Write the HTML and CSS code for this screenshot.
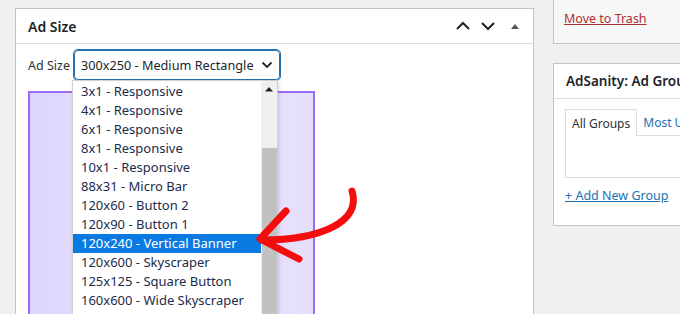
FILE: index.html
```html
<!DOCTYPE html>
<html lang="en">
<head>
  <meta charset="UTF-8">
  <title>Ad Size</title>
  <link rel="stylesheet" href="styles.css">
</head>
<body>

<div class="wrap">
  <!-- Ad Size box -->
  <div class="postbox main-box">
    <div class="box-head">
      <h2>Ad Size</h2>
      <div class="head-actions">
        <svg width="16" height="10" viewBox="0 0 16 10"><path d="M2 8 L8 2 L14 8" fill="none" stroke="#1d2327" stroke-width="2"/></svg>
        <svg width="16" height="10" viewBox="0 0 16 10"><path d="M2 2 L8 8 L14 2" fill="none" stroke="#1d2327" stroke-width="2"/></svg>
        <svg class="tri" width="10" height="8" viewBox="0 0 10 8"><path d="M1 7 L5 2 L9 7 Z" fill="#50575e"/></svg>
      </div>
    </div>
    <div class="box-body">
      <div class="size-row">
        <label>Ad Size</label>
        <div class="select">
          <span>300x250 - Medium Rectangle</span>
          <svg width="12" height="8" viewBox="0 0 12 8"><path d="M1.5 1.5 L6 6 L10.5 1.5" fill="none" stroke="#1d2327" stroke-width="1.8"/></svg>
        </div>
      </div>
      <div class="preview"></div>

      <!-- open dropdown list -->
      <div class="dropdown">
        <ul class="options">
          <li>3x1 - Responsive</li>
          <li>4x1 - Responsive</li>
          <li>6x1 - Responsive</li>
          <li>8x1 - Responsive</li>
          <li>10x1 - Responsive</li>
          <li>88x31 - Micro Bar</li>
          <li>120x60 - Button 2</li>
          <li>120x90 - Button 1</li>
          <li class="selected">120x240 - Vertical Banner</li>
          <li>120x600 - Skyscraper</li>
          <li>125x125 - Square Button</li>
          <li>160x600 - Wide Skyscraper</li>
        </ul>
        <div class="scrollbar">
          <svg width="10" height="6" viewBox="0 0 10 6"><path d="M1 5.5 L5 1 L9 5.5 Z" fill="#1d2327"/></svg>
          <div class="thumb"></div>
        </div>
      </div>
    </div>
  </div>

  <!-- side column -->
  <div class="side">
    <div class="postbox publish-box">
      <a class="trash" href="#">Move to Trash</a>
    </div>
    <div class="postbox groups-box">
      <div class="box-head">
        <h2>AdSanity: Ad Groups</h2>
      </div>
      <div class="groups-body">
        <div class="tabs">
          <span class="tab active">All Groups</span>
          <span class="tab">Most Used</span>
        </div>
        <div class="tab-panel"></div>
        <a class="add-link" href="#">+ Add New Group</a>
      </div>
    </div>
  </div>
</div>

<svg class="arrow" width="120" height="90" viewBox="250 180 120 90">
  <path d="M352 191 C 362 222, 320 240, 262 240" fill="none" stroke="#f40d0d" stroke-width="7" stroke-linecap="round"/>
  <path d="M286 211 L 260 239 L 299 259" fill="none" stroke="#f40d0d" stroke-width="7" stroke-linecap="round" stroke-linejoin="round"/>
</svg>

</body>
</html>
```

FILE: styles.css
```css
body {
  margin: 0;
  background-color: #f0f0f1;
  font-family: "Noto Sans", "Open Sans", sans-serif;
  color: #1d2327;
  overflow: hidden;
  height: 314px;
}
.wrap {
  display: flex;
  gap: 19px;
  padding: 8px 0 0 15px;
  height: 306px;
  width: 720px;
}
.postbox {
  background-color: #ffffff;
  border: 1px solid #c3c4c7;
  box-sizing: border-box;
  flex-shrink: 0;
}
.main-box {
  width: 519px;
  height: 320px;
  position: relative;
}
.box-head {
  height: 35px;
  border-bottom: 1px solid #dcdcde;
  display: flex;
  align-items: center;
  justify-content: space-between;
  padding: 0 12px;
  box-sizing: border-box;
}
.box-head h2 {
  margin: 0;
  font-size: 14px;
  font-weight: 600;
}
.head-actions {
  display: flex;
  align-items: center;
  gap: 9px;
  margin-right: 1px;
}
.head-actions .tri {
  margin-left: 5px;
}
.box-body {
  padding: 6px 12px 0;
}
.size-row {
  display: flex;
  align-items: center;
  gap: 4px;
  height: 30px;
}
.size-row label {
  font-size: 12.5px;
  color: #2c3338;
}
.select {
  width: 206px;
  height: 30px;
  box-sizing: border-box;
  border: 1px solid #2271b1;
  box-shadow: 0 0 0 1px #2271b1;
  border-radius: 4px;
  display: flex;
  align-items: center;
  justify-content: space-between;
  padding: 0 6px 0 6px;
  font-size: 12.7px;
  white-space: nowrap;
  color: #1d2327;
}
.preview {
  margin-top: 11px;
  width: 287px;
  height: 240px;
  box-sizing: border-box;
  border: 2px solid #9b6cf6;
  background: linear-gradient(90deg, #ddd4fb, #ebe5fd 40%, #e6dffc);
}
.dropdown {
  position: absolute;
  left: 56px;
  top: 71px;
  width: 206px;
  height: 250px;
  background-color: #ffffff;
  border: 1px solid #d0d0d0;
  box-sizing: border-box;
  box-shadow: 1px 2px 4px rgba(0, 0, 0, 0.15);
  display: flex;
}
.options {
  list-style: none;
  margin: 0;
  padding: 1px 0 0;
  flex: 1;
}
.options li {
  height: 19px;
  line-height: 19px;
  padding-left: 8px;
  font-size: 13px;
  color: #1d2b4c;
  white-space: nowrap;
}
.options li.selected {
  background-color: #0a7ae3;
  color: #ffffff;
}
.scrollbar {
  width: 16px;
  background-color: #f0f0f0;
  display: flex;
  flex-direction: column;
  align-items: center;
  padding-top: 5px;
  box-sizing: border-box;
}
.thumb {
  margin-top: 56px;
  width: 15px;
  flex: 1;
  background-color: #c1c1c1;
}
.side {
  display: flex;
  flex-direction: column;
  gap: 19px;
  margin-top: -10px;
  flex-shrink: 0;
}
.publish-box {
  width: 140px;
  height: 46px;
  background-color: #f6f7f7;
  padding: 8px 0 0 10px;
  box-sizing: border-box;
  border-top: none;
}
.trash {
  color: #b32d2e;
  font-size: 12.5px;
}
.groups-box {
  width: 140px;
  height: 163px;
}
.groups-box .box-head h2 {
  white-space: nowrap;
  font-size: 13.5px;
}
.groups-body {
  padding: 10px 0 0 11px;
}
.tabs {
  display: flex;
  height: 26px;
}
.tab {
  font-size: 12px;
  padding: 5px 6px 0;
  box-sizing: border-box;
  color: #2271b1;
  white-space: nowrap;
}
.tab.active {
  color: #2c3338;
  border: 1px solid #dcdcde;
  border-bottom: none;
  background-color: #ffffff;
  height: 27px;
  position: relative;
  z-index: 1;
}
.tab-panel {
  height: 41px;
  border: 1px solid #dcdcde;
  border-right: none;
}
.add-link {
  display: inline-block;
  margin-top: 9px;
  font-size: 12.5px;
  color: #2271b1;
}
.arrow {
  position: absolute;
  left: 250px;
  top: 180px;
}
```
